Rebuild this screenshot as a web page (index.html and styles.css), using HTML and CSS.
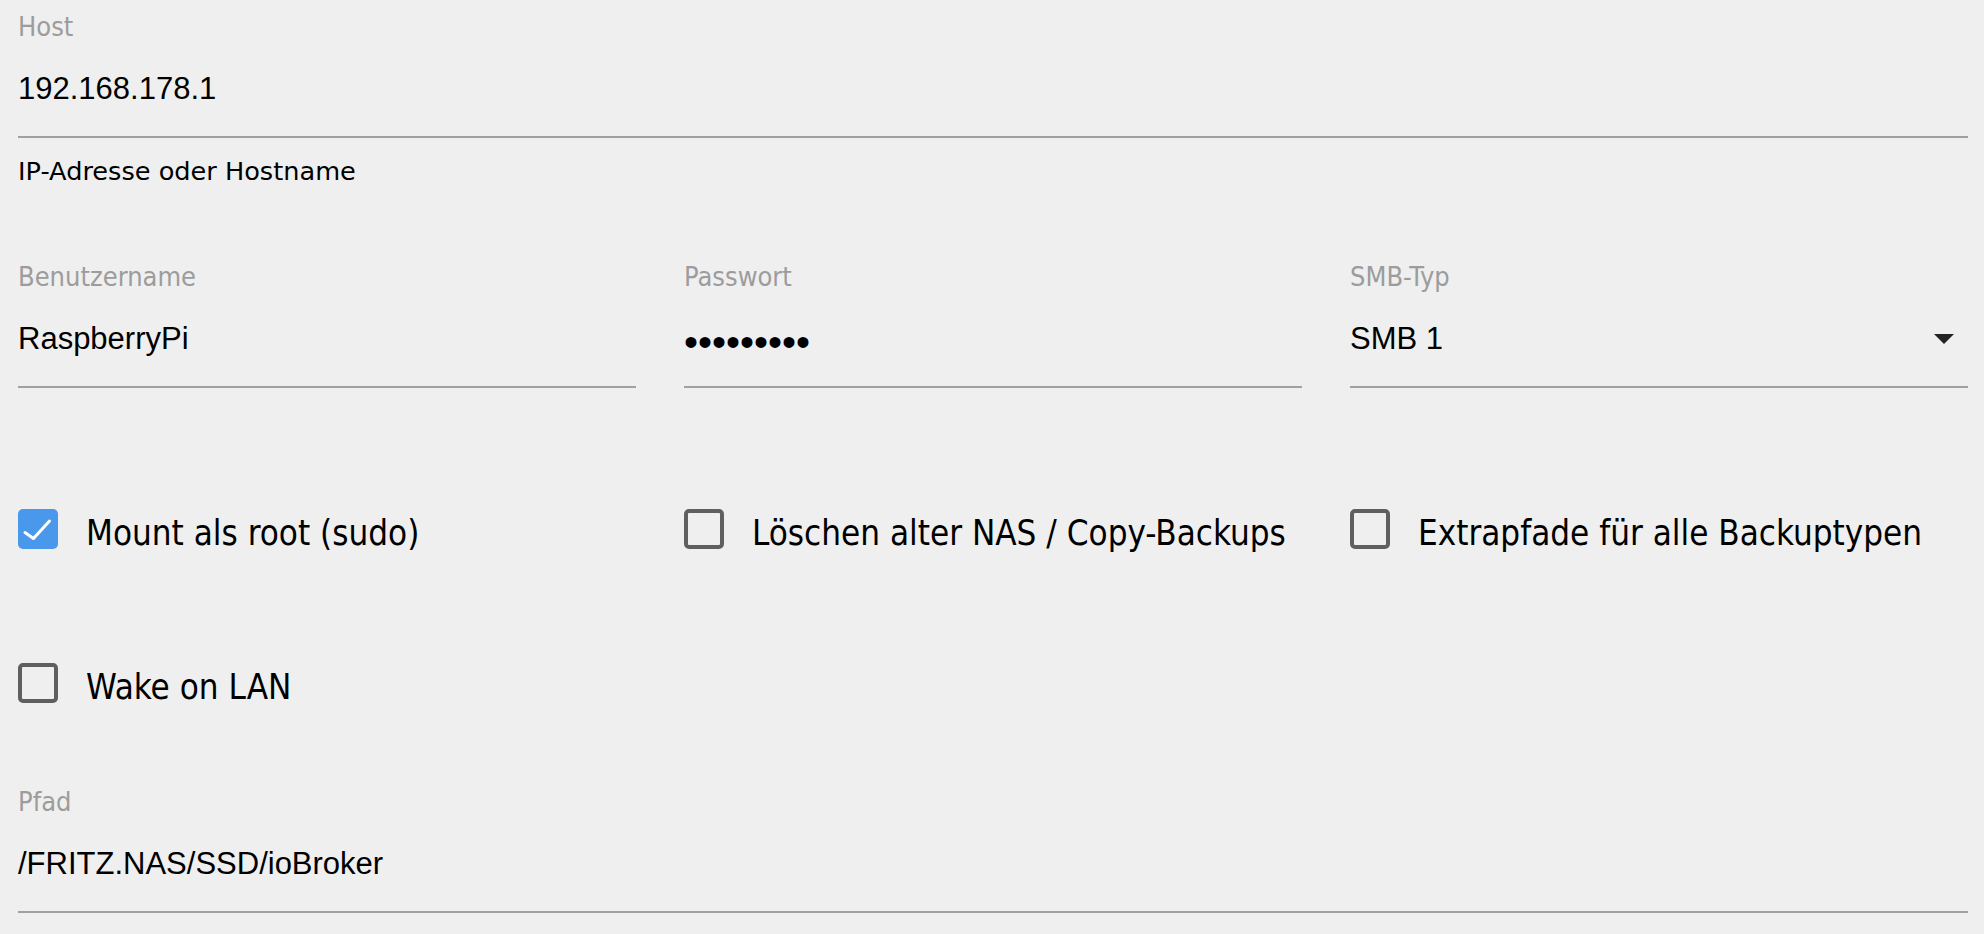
FILE: index.html
```html
<!DOCTYPE html>
<html lang="de">
<head>
<meta charset="utf-8">
<title>NAS Einstellungen</title>
<link rel="stylesheet" href="styles.css">
</head>
<body>
<form class="form">
  <div class="field">
    <label class="label">Host</label>
    <div class="input">192.168.178.1</div>
    <div class="helper">IP-Adresse oder Hostname</div>
  </div>

  <div class="grid fields-row">
    <div class="field">
      <label class="label">Benutzername</label>
      <div class="input">RaspberryPi</div>
    </div>
    <div class="field">
      <label class="label">Passwort</label>
      <div class="input password">&#8226;&#8226;&#8226;&#8226;&#8226;&#8226;&#8226;&#8226;&#8226;</div>
    </div>
    <div class="field">
      <label class="label">SMB-Typ</label>
      <div class="input select">
        <span>SMB 1</span>
        <svg class="caret" width="20" height="10" viewBox="0 0 20 10"><path d="M0 0h20L10 10z" fill="#222"/></svg>
      </div>
    </div>
  </div>

  <div class="grid checks">
    <div class="check">
      <span class="box checked">
        <svg width="40" height="40" viewBox="0 0 40 40"><path d="M7 23.5l8.5 6L31.5 12" fill="none" stroke="#fff" stroke-width="3" stroke-linecap="round" stroke-linejoin="round"/></svg>
      </span>
      <span class="check-label">Mount als root (sudo)</span>
    </div>
    <div class="check">
      <span class="box"></span>
      <span class="check-label">Löschen alter NAS / Copy-Backups</span>
    </div>
    <div class="check">
      <span class="box"></span>
      <span class="check-label">Extrapfade für alle Backuptypen</span>
    </div>
    <div class="check">
      <span class="box"></span>
      <span class="check-label">Wake on LAN</span>
    </div>
  </div>

  <div class="field path">
    <label class="label">Pfad</label>
    <div class="input">/FRITZ.NAS/SSD/ioBroker</div>
  </div>
</form>
</body>
</html>
```

FILE: styles.css
```css
html, body {
  margin: 0;
  padding: 0;
  background: #efefef;
}

body {
  padding: 0 16px 0 18px;
  color: #000;
  font-family: "Liberation Sans", Arial, sans-serif;
}

.form {
  display: flex;
  flex-direction: column;
}

.field {
  display: flex;
  flex-direction: column;
  padding-top: 11px;
}

.label {
  display: block;
  font-family: "DejaVu Sans Condensed", "DejaVu Sans", sans-serif;
  font-stretch: condensed;
  font-size: 27px;
  line-height: 32px;
  height: 32px;
  color: #9c9c9c;
}

.input {
  font-family: "Liberation Sans", Arial, sans-serif;
  font-size: 31px;
  line-height: 48px;
  height: 48px;
  padding: 22px 0 23px;
  border-bottom: 2px solid #a0a0a0;
  color: #000;
  white-space: nowrap;
}

.password {
  font-size: 40px;
  letter-spacing: 0;
  padding-top: 25px;
  padding-bottom: 20px;
}

.select {
  display: flex;
  align-items: center;
  justify-content: space-between;
}

.caret {
  margin-right: 14px;
  display: block;
}

.helper {
  font-family: "DejaVu Sans", sans-serif;
  font-size: 25.6px;
  line-height: 32px;
  margin-top: 17px;
  color: #000;
}

.grid {
  display: grid;
  grid-template-columns: repeat(3, 1fr);
  column-gap: 48px;
}

.fields-row {
  margin-top: 63px;
}

.checks {
  margin-top: 101px;
  row-gap: 74px;
}

.check {
  display: flex;
  align-items: center;
  height: 80px;
  gap: 28px;
}

.box {
  flex: none;
  box-sizing: border-box;
  width: 40px;
  height: 40px;
  border: 4px solid #5f5f5f;
  border-radius: 5px;
}

.box.checked {
  border: none;
  background: #4a98ec;
}

.box.checked svg {
  display: block;
}

.check-label {
  font-family: "DejaVu Sans Condensed", "DejaVu Sans", sans-serif;
  font-stretch: condensed;
  font-size: 34.7px;
  line-height: 40px;
  padding-top: 8px;
  white-space: nowrap;
}

.path {
  margin-top: 52px;
}
```
